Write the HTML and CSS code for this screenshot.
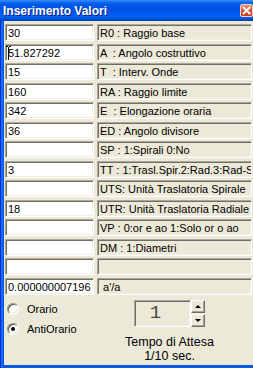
FILE: index.html
```html
<!DOCTYPE html>
<html>
<head>
<meta charset="utf-8">
<link rel="stylesheet" href="styles.css">
</head>
<body>
<div class="window">
  <div class="titlebar">
    <span class="title">Inserimento Valori</span>
    <span class="close"><svg width="11" height="11" viewBox="0 0 11 11"><path d="M2.5 2.5L8.5 8.5M8.5 2.5L2.5 8.5" stroke="#fff" stroke-width="1.8" stroke-linecap="square"/></svg></span>
  </div>
  <div class="client">
    <div class="grid">
      <div class="field">30</div><div class="label">R0 : Raggio base</div>
      <div class="field cursor-host">51.827292<svg class="ibeam" width="5" height="15" viewBox="0 0 5 15"><path d="M0 0.5H2M3 0.5H5M2.5 1V14M0 14.5H2M3 14.5H5" stroke="#000" stroke-width="1"/></svg></div><div class="label">A  : Angolo costruttivo</div>
      <div class="field">15</div><div class="label">T  : Interv. Onde</div>
      <div class="field">160</div><div class="label">RA : Raggio limite</div>
      <div class="field">342</div><div class="label">E  : Elongazione oraria</div>
      <div class="field">36</div><div class="label">ED : Angolo divisore</div>
      <div class="field"></div><div class="label">SP : 1:Spirali 0:No</div>
      <div class="field">3</div><div class="label">TT : 1:Trasl.Spir.2:Rad.3:Rad-S</div>
      <div class="field"></div><div class="label">UTS: Unità Traslatoria Spirale</div>
      <div class="field">18</div><div class="label">UTR: Unità Traslatoria Radiale</div>
      <div class="field"></div><div class="label">VP : 0:or e ao 1:Solo or o ao</div>
      <div class="field"></div><div class="label">DM : 1:Diametri</div>
      <div class="field"></div><div class="label"></div>
      <div class="field">0.000000007196</div><div class="label"> a'/a</div>
    </div>
    <div class="bottom">
      <div class="radios">
        <div class="radio"><span class="circle"></span><span>Orario</span></div>
        <div class="radio"><span class="circle checked"></span><span>AntiOrario</span></div>
      </div>
      <div class="timer">
        <div class="spin">
          <div class="spin-box">1</div>
          <div class="spin-btns">
            <div class="spin-btn"><span class="arrow-up"></span></div>
            <div class="spin-btn"><span class="arrow-down"></span></div>
          </div>
        </div>
        <div class="caption">Tempo di Attesa<br>1/10 sec.</div>
      </div>
    </div>
  </div>
</div>
</body>
</html>
```
FILE: styles.css
```css
html, body {
  margin: 0;
  padding: 0;
}
body {
  width: 253px;
  height: 368px;
  overflow: hidden;
  font-family: "Liberation Sans", Arial, sans-serif;
  font-size: 11px;
  color: #000;
}
.window {
  height: 368px;
  display: flex;
  flex-direction: column;
  background: linear-gradient(to right, #0831d9 0 1px, #166aee 1px 3px, #0855dd 3px 4px, #0b56e2 4px);
}
.titlebar {
  height: 21px;
  flex: none;
  display: flex;
  align-items: center;
  justify-content: space-between;
  padding-left: 3px;
  background: linear-gradient(to bottom, #3a8cf8 0, #2a7ff5 1px, #0a62ee 3px, #0058e6 5px, #0054e3 8px, #0055eb 12px, #005bf5 14px, #0262f4 16px, #0058e8 18px, #0047c8 20px, #003aa8 21px);
}
.title {
  color: #fff;
  font-weight: bold;
  font-size: 12px;
  text-shadow: 1px 1px 0 #0a1e8c;
}
.close {
  width: 13px;
  height: 13px;
  box-sizing: border-box;
  border: 1px solid #f4d6cc;
  border-radius: 2px;
  background: linear-gradient(to bottom, #eb8a6c, #d95a33 50%, #c7421d);
  display: flex;
  align-items: center;
  justify-content: center;
}
.close svg {
  display: block;
}
.client {
  flex: 1;
  margin-left: 4px;
  margin-bottom: 3px;
  background: #ece9d8;
  padding: 3px 1px 0 1px;
}
.grid {
  display: grid;
  grid-template-columns: 89px 155px;
  column-gap: 3px;
  grid-auto-rows: 17px;
  row-gap: 2.54px;
}
.field, .label {
  box-sizing: border-box;
  border: 1px solid;
  border-color: #aca899 #fff #fff #aca899;
  box-shadow: inset 1px 1px 0 #716f64, inset -1px -1px 0 #f1efe2;
  padding: 1px 2px 0 2px;
  line-height: 14px;
  white-space: pre;
  overflow: hidden;
}
.field {
  background: #fff;
}
.label {
  background: #ece9d8;
}
.cursor-host {
  position: relative;
}
.ibeam {
  position: absolute;
  left: 0;
  top: 1px;
}
.bottom {
  display: flex;
}
.radios {
  width: 127px;
  display: flex;
  flex-direction: column;
  gap: 8px;
  padding-top: 8px;
  padding-left: 2px;
}
.radio {
  height: 12px;
  display: flex;
  align-items: center;
  gap: 8px;
  white-space: nowrap;
}
.circle {
  width: 12px;
  height: 12px;
  box-sizing: border-box;
  border-radius: 50%;
  border: 1px solid;
  border-color: #8f8c80 #fff #fff #8f8c80;
  box-shadow: inset 1px 1px 0 #5c5a50, inset -1px -1px 0 #e6e3d6;
  background: #fff;
  display: flex;
  align-items: center;
  justify-content: center;
  flex: none;
}
.circle.checked::after {
  content: "";
  width: 4px;
  height: 4px;
  border-radius: 50%;
  background: #000;
}
.timer {
  width: 71px;
  display: flex;
  flex-direction: column;
  align-items: center;
  padding-top: 5px;
}
.spin {
  display: flex;
}
.spin-box {
  width: 57px;
  height: 27px;
  box-sizing: border-box;
  border: 1px solid;
  border-color: #aca899 #fff #fff #aca899;
  box-shadow: inset 1px 1px 0 #716f64, inset -1px -1px 0 #f1efe2;
  background: #ece9d8;
  font-family: "Liberation Mono", "Courier New", monospace;
  font-size: 19px;
  line-height: 25px;
  text-align: center;
  padding-right: 14px;
  color: #444;
}
.spin-btns {
  display: flex;
  flex-direction: column;
  gap: 1px;
}
.spin-btn {
  width: 14px;
  height: 13px;
  box-sizing: border-box;
  border: 1px solid;
  border-color: #fff #716f64 #716f64 #fff;
  box-shadow: inset -1px -1px 0 #aca899;
  background: #ece9d8;
  display: flex;
  align-items: center;
  justify-content: center;
}
.arrow-up {
  width: 0;
  height: 0;
  border-left: 3px solid transparent;
  border-right: 3px solid transparent;
  border-bottom: 3px solid #000;
}
.arrow-down {
  width: 0;
  height: 0;
  border-left: 3px solid transparent;
  border-right: 3px solid transparent;
  border-top: 3px solid #000;
}
.caption {
  margin-top: 8px;
  font-size: 12.5px;
  line-height: 14px;
  text-align: center;
  white-space: nowrap;
}
```
